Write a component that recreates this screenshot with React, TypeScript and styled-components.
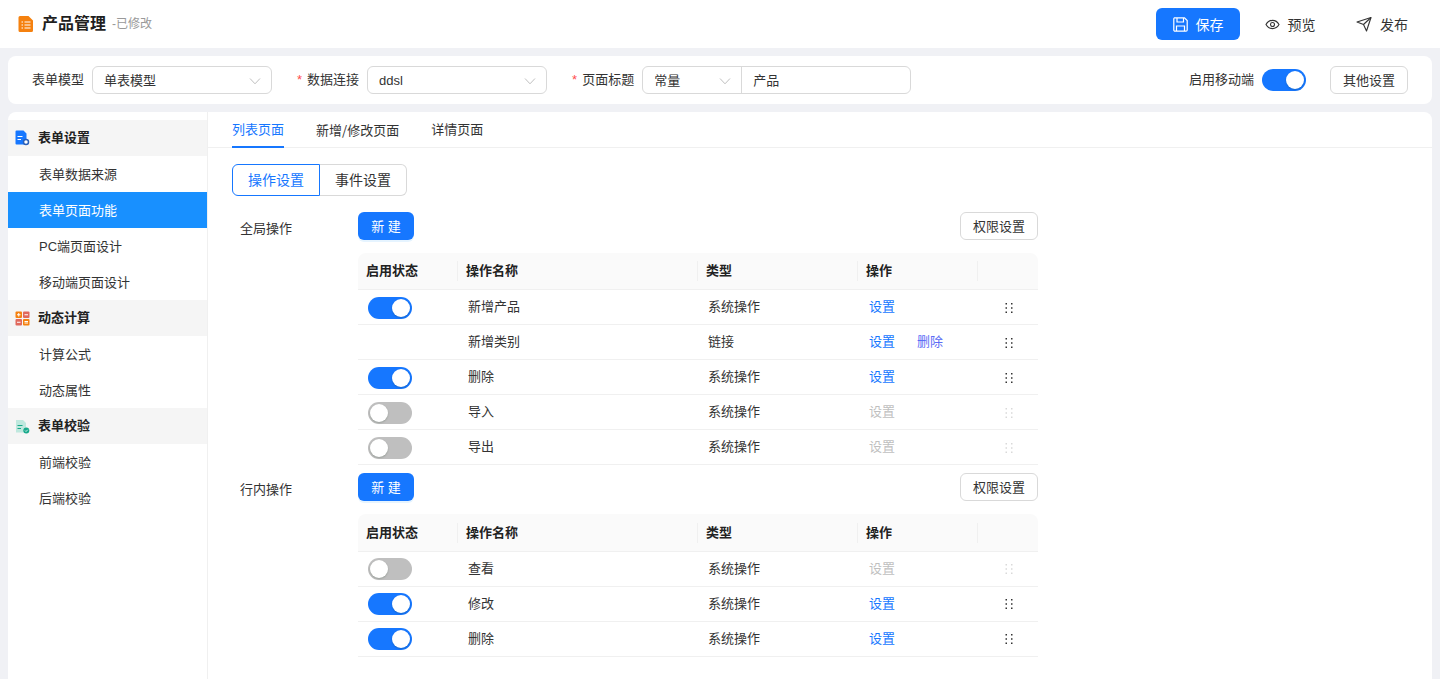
import React from "react";
import styled, { createGlobalStyle } from "styled-components";

const Global = createGlobalStyle`
  html, body { margin: 0; padding: 0; height: 100%; overflow: hidden; }
  body { background: #f0f1f5; font-family: "Liberation Sans", "Noto Sans CJK SC", sans-serif; font-size: 13px; line-height: 20px; color: #333; }
  * { box-sizing: border-box; }
`;

const Page = styled.div`
  width: 1440px; height: 679px; display: flex; flex-direction: column; overflow: hidden;
`;
const Header = styled.header`
  height: 48px; background: #fff; display: flex; align-items: center; padding: 0 12px 0 18px; flex: none;
`;
const Title = styled.h1`
  margin: 0 0 0 8px; font-size: 16px; line-height: 24px; font-weight: 700; color: #1f1f1f;
`;
const Modified = styled.span`
  margin-left: 6px; font-size: 12px; color: #999; line-height: 24px;
`;
const HeaderActions = styled.div`
  margin-left: auto; display: flex; align-items: center;
`;
const SaveButton = styled.button`
  width: 84px; height: 32px; border: 0; border-radius: 6px; background: #1677ff; color: #fff; margin-right: 4px;
  font: inherit; font-size: 14px; display: flex; align-items: center; justify-content: center; gap: 8px; padding: 0;
`;
const GhostAction = styled.button`
  width: 92px; height: 32px; border: 0; background: transparent; color: #333; font: inherit; font-size: 14px;
  display: flex; align-items: center; justify-content: center; gap: 8px; padding: 0;
`;
const ActionText = styled.span`
  padding-top: 2px;
`;

const Toolbar = styled.section`
  margin: 8px 8px 0; height: 48px; background: #fff; border-radius: 8px; display: flex; align-items: center;
  padding: 0 24px; flex: none;
`;
const FieldLabel = styled.span<{ $gap?: number }>`
  margin-left: ${p => p.$gap ?? 0}px; margin-right: 8px; color: #333; font-size: 13px; white-space: nowrap; line-height: 20px;
`;
const Req = styled.span`
  color: #ff4d4f; margin-right: 5px;
`;
const SelectBox = styled.div<{ $w: number }>`
  width: ${p => p.$w}px; height: 28px; border: 1px solid #d9d9d9; border-radius: 6px; display: flex; align-items: center;
  padding: 2px 10px 0 11px; justify-content: space-between; color: #333; font-size: 13px; background: #fff;
`;
const Combined = styled.div`
  width: 269px; height: 28px; border: 1px solid #d9d9d9; border-radius: 6px; display: flex; align-items: stretch; background: #fff;
`;
const ComboSelect = styled.div`
  width: 99px; border-right: 1px solid #d9d9d9; display: flex; align-items: center; justify-content: space-between; padding: 2px 10px 0 11px;
`;
const ComboInput = styled.div`
  flex: 1; display: flex; align-items: center; padding: 2px 11px 0;
`;
const ToolbarEnd = styled.div`
  margin-left: auto; display: flex; align-items: center; gap: 0;
`;
const SwitchTrack = styled.span<{ $on: boolean }>`
  width: 44px; height: 22px; border-radius: 11px; background: ${p => (p.$on ? "#1677ff" : "#bfbfbf")}; display: inline-flex; align-items: center;
  padding: 2px; justify-content: ${p => (p.$on ? "flex-end" : "flex-start")}; flex: none;
`;
const SwitchKnob = styled.span`
  width: 18px; height: 18px; border-radius: 50%; background: #fff; box-shadow: 0 1px 2px rgba(0,35,11,.2);
`;
const OutlineButton = styled.button<{ $ml?: number }>`
  width: 78px; height: 28px; border: 1px solid #d9d9d9; border-radius: 6px; background: #fff; color: #333; font: inherit; font-size: 13px; padding: 2px 0 0;
  margin-left: ${p => p.$ml ?? 0}px;
`;

const Main = styled.main`
  margin: 8px 8px 0; flex: 1; min-height: 0; display: flex; background: #fff; border-radius: 8px 8px 0 0; overflow: hidden;
`;
const Sidebar = styled.nav`
  width: 200px; flex: none; border-right: 1px solid #f0f0f0; padding-top: 8px;
`;
const GroupHead = styled.div`
  height: 36px; background: #f5f5f5; display: flex; align-items: center; padding-left: 7px; gap: 8px; font-weight: 700; font-size: 13px; color: #222;
`;
const NavItem = styled.div<{ $active?: boolean }>`
  height: 36px; display: flex; align-items: center; padding: 2px 0 0 31px; font-size: 13px;
  color: ${p => (p.$active ? "#fff" : "#333")}; background: ${p => (p.$active ? "#1890ff" : "transparent")};
`;
const Content = styled.div`
  flex: 1; min-width: 0;
`;
const Tabs = styled.div`
  height: 36px; border-bottom: 1px solid #f0f0f0; display: flex; gap: 32px; padding-left: 24px;
`;
const Tab = styled.div<{ $active?: boolean }>`
  height: 36px; line-height: 36px; font-size: 13px; color: ${p => (p.$active ? "#1677ff" : "#333")};
  border-bottom: 2px solid ${p => (p.$active ? "#1677ff" : "transparent")};
`;
const Slash = styled.span`
  font-family: "Noto Sans CJK SC", sans-serif;
`;
const Body = styled.div`
  padding: 16px 24px 0;
`;
const Segments = styled.div`
  display: flex; height: 32px;
`;
const Segment = styled.div<{ $active?: boolean; $pos: "l" | "r" }>`
  width: ${p => (p.$pos === "l" ? 88 : 87)}px; display: flex; align-items: center; justify-content: center; font-size: 14px;
  border: 1px solid ${p => (p.$active ? "#1677ff" : "#d9d9d9")};
  ${p => (p.$pos === "l" ? "border-radius: 6px 0 0 6px;" : "border-radius: 0 6px 6px 0; border-left: 0;")}
  color: ${p => (p.$active ? "#1677ff" : "#333")};
`;
const Block = styled.div<{ $top: number }>`
  display: flex; margin-top: ${p => p.$top}px; width: 806px;
`;
const BlockLabel = styled.div`
  width: 126px; padding-left: 8px; line-height: 34px; font-size: 13px; flex: none;
`;
const BlockMain = styled.div`
  width: 680px;
`;
const BlockBar = styled.div`
  display: flex; justify-content: space-between; height: 28px; margin-bottom: 13px;
`;
const PrimaryButton = styled.button`
  width: 56px; height: 28px; border: 0; border-radius: 6px; background: #1677ff; color: #fff; font: inherit; font-size: 13px; padding: 2px 0 0;
  box-shadow: 0 2px 0 rgba(5,145,255,.1);
`;
const Row = styled.div<{ $head?: boolean; $h?: number }>`
  display: grid; grid-template-columns: 100px 240px 160px 120px 60px; height: ${p => p.$h ?? 35}px; align-items: center;
  border-bottom: 1px solid #f0f0f0; font-size: 13px;
  ${p => p.$head && "background: #fafafa; font-weight: 700; color: #222; border-radius: 8px 8px 0 0;"}
`;
const HeadCell = styled.div<{ $sep?: boolean }>`
  height: 100%; display: flex; align-items: center; padding-left: 8px; position: relative;
  ${p => p.$sep && `&::after { content: ""; position: absolute; right: 0; top: 50%; height: 20px; margin-top: -10px; width: 1px; background: #f0f0f0; }`}
`;
const Cell = styled.div<{ $pl?: number; $gap?: number }>`
  padding-left: ${p => p.$pl ?? 10}px; display: flex; align-items: center; gap: ${p => p.$gap ?? 0}px;
`;
const ToggleCell = styled.div<{ $nudge: boolean }>`
  padding-left: 10px; display: flex; align-items: center; height: 22px;
  margin-top: ${p => (p.$nudge ? 2 : 0)}px;
`;
const DragCell = styled.div<{ $nudge: boolean }>`
  display: flex; justify-content: center; margin-top: ${p => (p.$nudge ? 2 : 0)}px;
`;
const Link = styled.span<{ $off?: boolean; $danger?: boolean }>`
  color: ${p => (p.$off ? "#bfbfbf" : p.$danger ? "#5b6cf5" : "#1677ff")};
`;

const Chevron = () => (
  <svg width="12" height="12" viewBox="0 0 12 12" fill="none" stroke="#bfbfbf" strokeWidth="1">
    <path d="M1 3.5 6 8.8 11 3.5" />
  </svg>
);

const DocIcon = () => (
  <svg width="16" height="18" viewBox="0 0 16 18">
    <path d="M2 1h8.500L15 5.500V15.500a1.500 1.500 0 0 1-1.500 1.500H2A1.500 1.500 0 0 1 .5 15.500V2.500A1.500 1.500 0 0 1 2 1z" fill="#f5810f" />
    <path d="M3.500 7h1.500M6.500 7h6M3.500 10h1.500M6.500 10h6M3.500 13h1.500M6.500 13h6" stroke="#fff" strokeWidth="1.200" />
  </svg>
);
const SaveIcon = () => (
  <svg width="15" height="15" viewBox="0 0 15 15" fill="none" stroke="#fff" strokeWidth="1.200">
    <path d="M1.500.8h10l2.700 2.700v9.500a1.200 1.200 0 0 1-1.200 1.200H2a1.200 1.200 0 0 1-1.200-1.200V2a1.200 1.200 0 0 1 .7-1.200z" />
    <path d="M4 1v4h6.500V1M3.500 14V9h8v5" />
  </svg>
);
const EyeIcon = () => (
  <svg width="15" height="15" viewBox="0 0 15 15" fill="none" stroke="#333" strokeWidth="1.100">
    <path d="M1 7.500C2.500 4.800 4.800 3.400 7.500 3.400S12.500 4.800 14 7.500C12.500 10.200 10.200 11.600 7.500 11.600S2.500 10.200 1 7.500z" />
    <circle cx="7.500" cy="7.500" r="2" />
  </svg>
);
const SendIcon = () => (
  <svg width="16" height="16" viewBox="0 0 16 16" fill="none" stroke="#333" strokeWidth="1.100" strokeLinejoin="round">
    <path d="M1 6 15 1.500 10.500 15 7.500 8.500z" />
    <path d="M7.500 8.500 15 1.500" />
  </svg>
);
const FormIcon = () => (
  <svg width="15" height="16" viewBox="0 0 15 16">
    <path d="M1.500 .5H8.500l3 3V14.500H1.500A1 1 0 0 1 .5 13.500V1.500A1 1 0 0 1 1.500 .5z" fill="#1677ff" />
    <path d="M2.500 6.500h5M2.500 9.500h3.500" stroke="#fff" strokeWidth="1" />
    <circle cx="11" cy="12" r="2.500" fill="#fff" stroke="#2a5fb8" strokeWidth="1.500" />
  </svg>
);
const CalcIcon = () => (
  <svg width="15" height="15" viewBox="0 0 15 15">
    <rect x="0.500" y="0.500" width="6.500" height="6.500" rx="1" fill="#f5810f" />
    <rect x="8" y="0.500" width="6.500" height="6.500" rx="1" fill="#e0695c" />
    <rect x="0.500" y="8" width="6.500" height="6.500" rx="1" fill="#e0695c" />
    <rect x="8" y="8" width="6.500" height="6.500" rx="1" fill="#f5810f" />
    <path d="M2 3.750h3.500M3.750 2v3.500M9.500 3.750h3.500M2 11.250h3.500M9.500 10.500h3.500M9.500 12h3.500" stroke="#fff" strokeWidth="1" />
  </svg>
);
const CheckIcon = () => (
  <svg width="15" height="15" viewBox="0 0 15 15">
    <path d="M1 1h7l3 3v9.500H1z" fill="#bfe8de" />
    <path d="M2.500 6.500h5M2.500 9.500h3.500" stroke="#17a98a" strokeWidth="1" />
    <circle cx="11.300" cy="11.500" r="3" fill="#17a98a" />
    <path d="M10 11.500l1 1 1.800-1.800" stroke="#fff" strokeWidth=".8" fill="none" />
  </svg>
);
const Drag = ({ off }: { off: boolean }) => (
  <svg width="9" height="14" viewBox="0 0 9 14" fill={off ? "#d9d9d9" : "#333"}>
    {[2, 6.25, 10.5].flatMap(y => [1.5, 7].map(x => <rect key={`${x}-${y}`} x={x} y={y} width="1.500" height="1.500" />))}
  </svg>
);

const Toggle = ({ on }: { on: boolean }) => (
  <SwitchTrack $on={on}><SwitchKnob /></SwitchTrack>
);

type R = { name: string; type: string; state: "on" | "off" | "none"; del?: boolean };

const OpTable = ({ rows, headH, nudge }: { rows: R[]; headH: number; nudge: boolean }) => (
  <div>
    <Row $head $h={headH}>
      <HeadCell $sep>启用状态</HeadCell>
      <HeadCell $sep>操作名称</HeadCell>
      <HeadCell $sep>类型</HeadCell>
      <HeadCell $sep>操作</HeadCell>
      <HeadCell />
    </Row>
    {rows.map((r, i) => (
      <Row key={i}>
        <ToggleCell $nudge={nudge}>{r.state !== "none" && <Toggle on={r.state === "on"} />}</ToggleCell>
        <Cell>{r.name}</Cell>
        <Cell>{r.type}</Cell>
        <Cell $pl={11} $gap={22}>
          <Link $off={r.state === "off"}>设置</Link>
          {r.del && <Link $danger>删除</Link>}
        </Cell>
        <DragCell $nudge={nudge}><Drag off={r.state === "off"} /></DragCell>
      </Row>
    ))}
  </div>
);

const globalRows: R[] = [
  { name: "新增产品", type: "系统操作", state: "on" },
  { name: "新增类别", type: "链接", state: "none", del: true },
  { name: "删除", type: "系统操作", state: "on" },
  { name: "导入", type: "系统操作", state: "off" },
  { name: "导出", type: "系统操作", state: "off" },
];
const inlineRows: R[] = [
  { name: "查看", type: "系统操作", state: "off" },
  { name: "修改", type: "系统操作", state: "on" },
  { name: "删除", type: "系统操作", state: "on" },
];

export default function App() {
  return (
    <Page>
      <Global />
      <Header>
        <DocIcon />
        <Title>产品管理</Title>
        <Modified>-已修改</Modified>
        <HeaderActions>
          <SaveButton><SaveIcon /><ActionText>保存</ActionText></SaveButton>
          <GhostAction><EyeIcon /><ActionText>预览</ActionText></GhostAction>
          <GhostAction><SendIcon /><ActionText>发布</ActionText></GhostAction>
        </HeaderActions>
      </Header>
      <Toolbar>
        <FieldLabel>表单模型</FieldLabel>
        <SelectBox $w={180}>单表模型<Chevron /></SelectBox>
        <FieldLabel $gap={25}><Req>*</Req>数据连接</FieldLabel>
        <SelectBox $w={180}>ddsl<Chevron /></SelectBox>
        <FieldLabel $gap={25}><Req>*</Req>页面标题</FieldLabel>
        <Combined>
          <ComboSelect>常量<Chevron /></ComboSelect>
          <ComboInput>产品</ComboInput>
        </Combined>
        <ToolbarEnd>
          <FieldLabel>启用移动端</FieldLabel>
          <Toggle on />
          <OutlineButton $ml={24}>其他设置</OutlineButton>
        </ToolbarEnd>
      </Toolbar>
      <Main>
        <Sidebar>
          <GroupHead><FormIcon />表单设置</GroupHead>
          <NavItem>表单数据来源</NavItem>
          <NavItem $active>表单页面功能</NavItem>
          <NavItem>PC端页面设计</NavItem>
          <NavItem>移动端页面设计</NavItem>
          <GroupHead><CalcIcon />动态计算</GroupHead>
          <NavItem>计算公式</NavItem>
          <NavItem>动态属性</NavItem>
          <GroupHead><CheckIcon />表单校验</GroupHead>
          <NavItem>前端校验</NavItem>
          <NavItem>后端校验</NavItem>
        </Sidebar>
        <Content>
          <Tabs>
            <Tab $active>列表页面</Tab>
            <Tab>新增<Slash>/</Slash>修改页面</Tab>
            <Tab>详情页面</Tab>
          </Tabs>
          <Body>
            <Segments>
              <Segment $pos="l" $active>操作设置</Segment>
              <Segment $pos="r">事件设置</Segment>
            </Segments>
            <Block $top={16}>
              <BlockLabel>全局操作</BlockLabel>
              <BlockMain>
                <BlockBar>
                  <PrimaryButton>新 建</PrimaryButton>
                  <OutlineButton>权限设置</OutlineButton>
                </BlockBar>
                <OpTable rows={globalRows} headH={37} nudge />
              </BlockMain>
            </Block>
            <Block $top={8}>
              <BlockLabel>行内操作</BlockLabel>
              <BlockMain>
                <BlockBar>
                  <PrimaryButton>新 建</PrimaryButton>
                  <OutlineButton>权限设置</OutlineButton>
                </BlockBar>
                <OpTable rows={inlineRows} headH={38} nudge={false} />
              </BlockMain>
            </Block>
          </Body>
        </Content>
      </Main>
    </Page>
  );
}
